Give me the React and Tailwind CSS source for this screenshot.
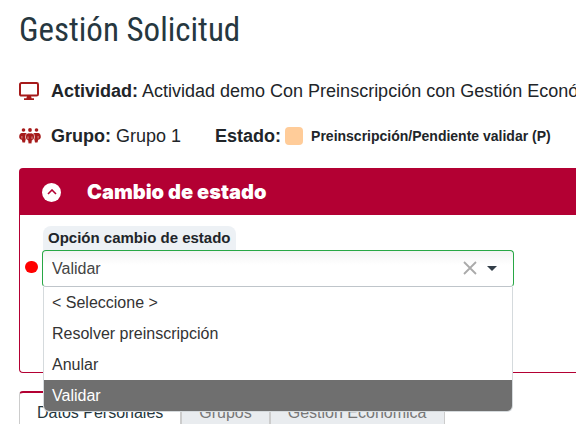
import { useState } from "react";
import { clsx } from "clsx";

const OPTIONS = ["< Seleccione >", "Resolver preinscripción", "Anular", "Validar"];
const TABS = ["Datos Personales", "Grupos", "Gestión Económica"];

function MonitorIcon() {
    return (
        <svg viewBox="0 0 20 18" className="h-[18px] w-5 shrink-0" fill="none" aria-hidden="true">
            <rect x="1" y="1" width="18" height="12.6" rx="1.4" stroke="#a61b1b" strokeWidth="2" />
            <path d="M8 14h4l.6 2.2H15V18H5v-1.8h2.4z" fill="#a61b1b" />
        </svg>
    );
}

function GroupIcon() {
    return (
        <svg viewBox="0 0 22 16" className="h-4 w-[22px] shrink-0" fill="#a61b1b" aria-hidden="true">
            <circle cx="4.5" cy="2" r="1.8" />
            <circle cx="11" cy="2" r="1.9" />
            <circle cx="17.5" cy="2" r="1.8" />
            <path d="M2.5 5h4C7.500 5.300 8 6 8 7.500L6.500 12l-.5 2.500H3.500L2.800 11.800C1.200 11.500.2 10.500.2 9c0-2 .8-3.700 2.300-4z" />
            <path d="M19.500 5h-4c-1 .3-1.500 1-1.500 2.500l1.500 4.500.5 2.500h2.500l.7-2.700c1.600-.3 2.600-1.300 2.600-2.800 0-2-.8-3.700-2.300-4z" />
            <path d="M9.200 5h3.600c1.900.3 2.700 2 2.700 4 0 1.700-.8 2.800-2.200 3.200L12.700 15.800H9.300l-.6-3.600C7.300 11.800 6.500 10.700 6.500 9c0-2 .8-3.700 2.700-4z" stroke="#fff" strokeWidth=".7" />
            <path d="M2.900 8v2.500M19.100 8v2.500M9 8.500V11M13 8.500V11" stroke="#fff" strokeWidth=".5" />
        </svg>
    );
}

function StatusSelect() {
    const [value, setValue] = useState("Validar");

    return (
        <div className="relative w-[472px] max-w-full">
            <select
                id="estado"
                value={value}
                onChange={(e) => setValue(e.target.value)}
                className="block h-[37px] w-full appearance-none rounded border border-[#28a745] border-b-[#bfc5ca] bg-linear-to-b from-[#f3f3f3] to-white to-40% pl-[9px] text-base text-[#444] outline-none"
            >
                {OPTIONS.map((o) => (
                    <option key={o}>{o}</option>
                ))}
            </select>
            <button
                type="button"
                aria-label="Limpiar"
                onClick={() => setValue(OPTIONS[0])}
                className="absolute top-[11px] right-[37px] text-[#aaa]"
            >
                <svg viewBox="0 0 14 14" className="size-3.5" fill="none" stroke="currentColor" strokeWidth="1.8">
                    <path d="M1 1l12 12M13 1L1 13" />
                </svg>
            </button>
            <svg viewBox="0 0 10 5" className="pointer-events-none absolute top-4 right-[17px] h-[5px] w-2.5" fill="#333e48" aria-hidden="true">
                <path d="M0 0h10L5 5z" />
            </svg>

            {/* Option list */}
            <ul role="listbox" aria-label="Opciones" className="absolute inset-x-px top-full z-10 overflow-hidden rounded-b-md border border-t-0 border-[#d5dadd] bg-white">
                {OPTIONS.map((o) => (
                    <li key={o} role="option" aria-selected={o === value}>
                        <button
                            type="button"
                            onClick={() => setValue(o)}
                            className={clsx(
                                "block w-full px-2 py-1 text-left text-base leading-[23px]",
                                o === value ? "bg-[#6f6f6f] text-white" : "text-[#333]"
                            )}
                        >
                            {o}
                        </button>
                    </li>
                ))}
            </ul>
        </div>
    );
}

export default function App() {
    const [tab, setTab] = useState(TABS[0]);

    return (
        <main className="overflow-hidden bg-white pl-[19px] font-['Liberation_Sans',Arial,sans-serif] text-[#212529]">
            <h1 className="pt-2 font-['Liberation_Sans_Narrow','Roboto_Condensed','Liberation_Sans',sans-serif] text-[33px] leading-[44px] text-[#263740]">
                Gestión Solicitud
            </h1>

            <div className="mt-6 flex items-center gap-3 text-lg leading-[30px] whitespace-nowrap">
                <MonitorIcon />
                <p>
                    <strong>Actividad:</strong> Actividad demo Con Preinscripción con Gestión Económica
                </p>
            </div>

            <div className="mt-4 flex items-center text-lg leading-[28px] whitespace-nowrap">
                <GroupIcon />
                <p className="ml-2.5">
                    <strong>Grupo:</strong> Grupo 1
                </p>
                <strong className="ml-[34px]">Estado:</strong>
                <span className="ml-1 size-[18px] rounded-sm bg-[#ffcc99]" />
                <strong className="ml-2 text-sm">Preinscripción/Pendiente validar (P)</strong>
            </div>

            {/* Status change panel */}
            <section className="mt-[18px] rounded-l border border-r-0 border-[#b30033]">
                <h2 className="flex h-[46px] items-center gap-[26px] bg-[#b30033] pl-[22px] font-['Inter',sans-serif] text-xl font-black text-white">
                    <button type="button" aria-label="Contraer" className="grid size-[19px] place-items-center rounded-full bg-white">
                        <svg viewBox="0 0 10 6" className="h-1.5 w-2.5" fill="none" stroke="#b30033" strokeWidth="1.6">
                            <path d="M1 5l4-4 4 4" />
                        </svg>
                    </button>
                    Cambio de estado
                </h2>
                <div className="h-[157px] pt-[11px] pl-[5px]">
                    <label htmlFor="estado" className="ml-[18px] inline-block rounded-t-lg bg-[#edf1f5] px-[5px] align-top text-[15px] leading-6 font-bold">
                        Opción cambio de estado
                    </label>
                    <div className="flex items-center gap-1">
                        <span className="mb-1 h-3 w-[13px] shrink-0 rounded-full bg-[#ff0000]" />
                        <StatusSelect />
                    </div>
                </div>
            </section>

            <div role="tablist" className="mt-[18px] flex text-base leading-6">
                {TABS.map((t) => (
                    <button
                        key={t}
                        type="button"
                        role="tab"
                        aria-selected={t === tab}
                        onClick={() => setTab(t)}
                        className={clsx(
                            "border-x border-t-2 px-[17px] pt-2 pb-3 whitespace-nowrap",
                            t === tab
                                ? "rounded-tl border-x-[#ccc] border-t-[#b30033] bg-white text-[#263740]"
                                : "border-[#ccc] bg-[#e9ecef] text-[#777]"
                        )}
                    >
                        {t}
                    </button>
                ))}
            </div>
        </main>
    );
}
